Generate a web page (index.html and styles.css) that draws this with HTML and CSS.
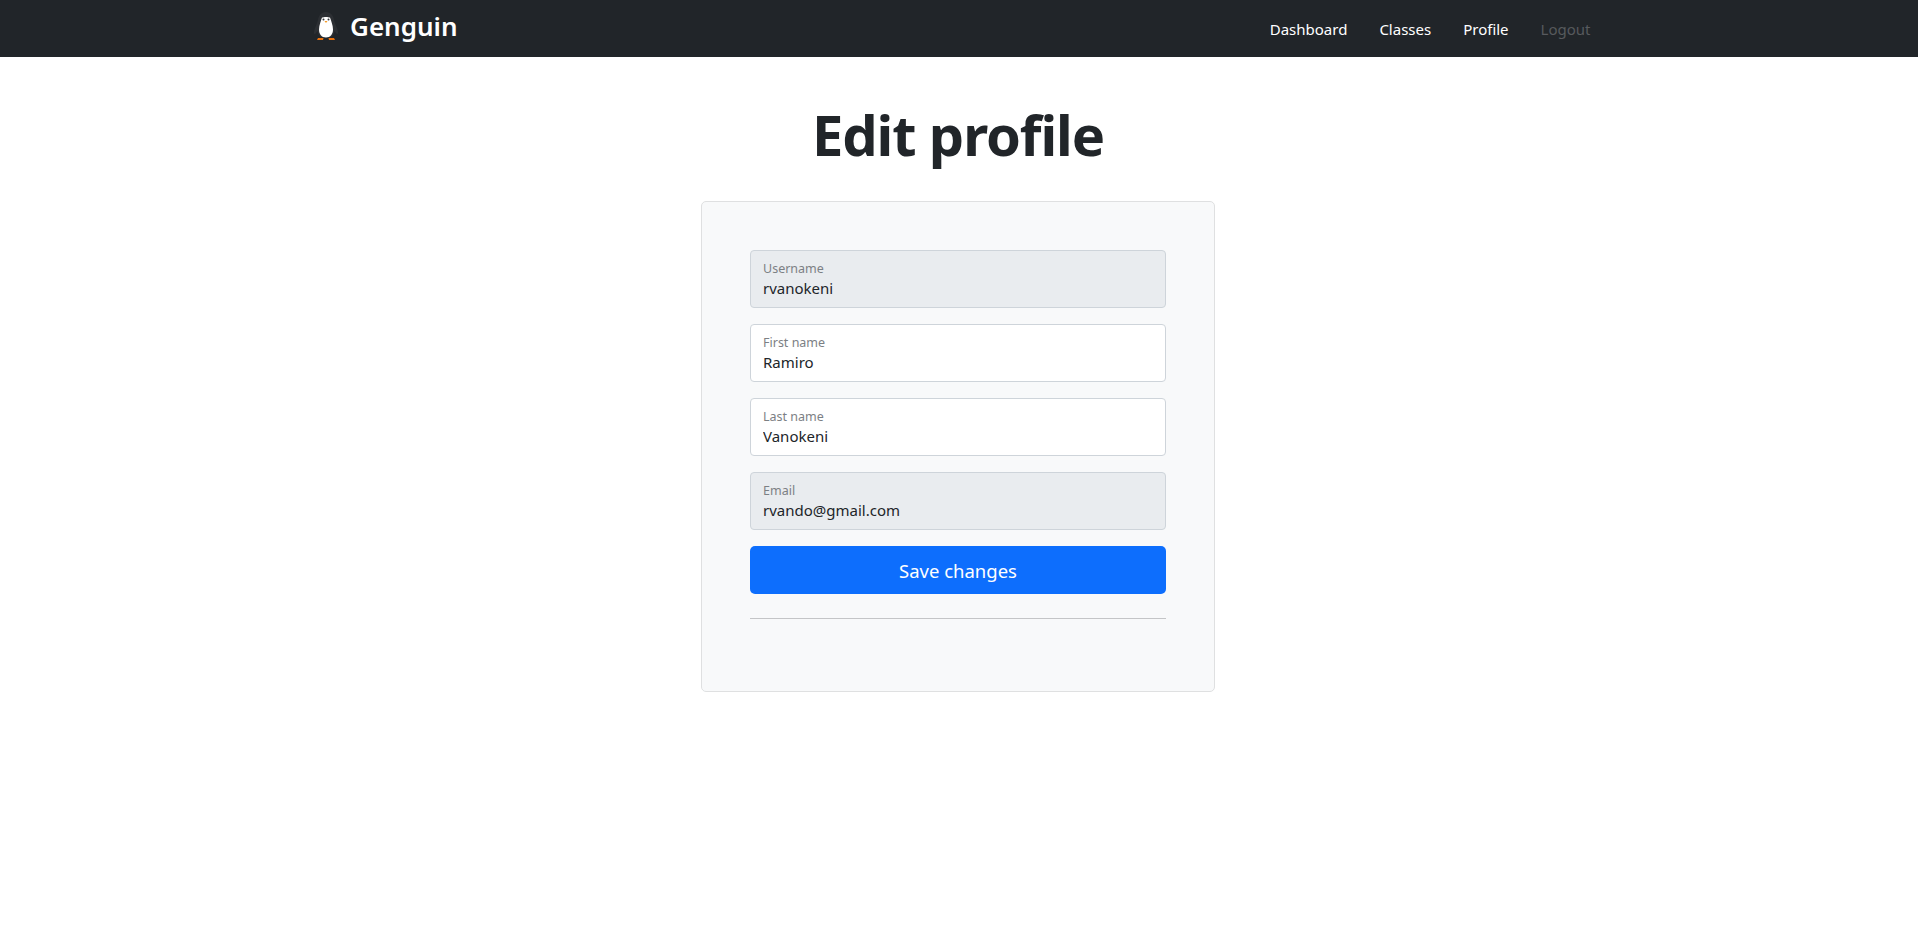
FILE: index.html
```html
<!DOCTYPE html>
<html lang="en">
<head>
<meta charset="utf-8">
<title>Edit profile - Genguin</title>
<link rel="stylesheet" href="styles.css">
</head>
<body>
<nav class="navbar">
  <div class="container nav-inner">
    <a class="brand" href="#">
      <svg class="logo" viewBox="0 0 50 50" width="50" height="50" aria-hidden="true">
        <path d="M25 11c-5 0-7.500 4-8 8-.500 3-3.500 8-4 12-.300 2 1 3 2 1l1.500-2c.500 3 1.500 5 3 6h11c1.500-1 2.500-3 3-6l1.500 2c1 2 2.300 1 2-1-.500-4-3.500-9-4-12-.500-4-3-8-8-8z" fill="#2c2f33"/>
        <path d="M25 16c-1.500 0-3 .500-4 .500-1 3-3 8-3 12 0 4.500 2.500 8 7 8s7-3.500 7-8c0-4-2-9-3-12-1 0-2.500-.500-4-.500z" fill="#fff"/>
        <circle cx="22.500" cy="18.500" r="1" fill="#33363a"/><circle cx="27.500" cy="18.500" r="1" fill="#33363a"/>
        <path d="M23.500 20h3l-1.500 2z" fill="#f59a23"/>
        <path d="M17 37h5.500l-.5 2h-6zM27.500 37H33l1 2h-6z" fill="#e8700c"/>
      </svg>
      <span class="brand-name">Genguin</span>
    </a>
    <ul class="nav-links">
      <li><a class="nav-link" href="#">Dashboard</a></li>
      <li><a class="nav-link" href="#">Classes</a></li>
      <li><a class="nav-link" href="#">Profile</a></li>
      <li><a class="nav-link muted" href="#">Logout</a></li>
    </ul>
  </div>
</nav>
<main class="container content">
  <h1 class="title">Edit profile</h1>
  <form class="card">
    <div class="field disabled">
      <label class="field-label" for="username">Username</label>
      <input class="field-input" id="username" value="rvanokeni" disabled>
    </div>
    <div class="field">
      <label class="field-label" for="first">First name</label>
      <input class="field-input" id="first" value="Ramiro">
    </div>
    <div class="field">
      <label class="field-label" for="last">Last name</label>
      <input class="field-input" id="last" value="Vanokeni">
    </div>
    <div class="field disabled">
      <label class="field-label" for="email">Email</label>
      <input class="field-input" id="email" value="rvando@gmail.com" disabled>
    </div>
    <button class="save" type="button">Save changes</button>
    <hr class="rule">
  </form>
</main>
</body>
</html>
```

FILE: styles.css
```css
* { box-sizing: border-box; }
html, body { margin: 0; height: 100%; }
body {
  background: #fff;
  color: #212529;
  font-family: "Noto Sans", "Open Sans", sans-serif;
  font-size: 16px;
  line-height: 1.5;
  overflow: hidden;
}
.container {
  width: 1320px;
  margin-left: 298px;
  padding: 0 12px;
}
.navbar {
  background: #212529;
  height: 57px;
  display: flex;
  align-items: center;
}
.nav-inner {
  display: flex;
  align-items: center;
  justify-content: space-between;
}
.brand {
  display: flex;
  align-items: center;
  color: #fff;
  text-decoration: none;
  margin-left: -9px;
}
.logo { display: block; margin-top: -5px; }
.brand-name {
  font-size: 26px;
  font-weight: 600;
  margin-left: -1px;
  margin-top: -5px;
}
.nav-links {
  display: flex;
  list-style: none;
  margin: 0 7.5px 0 0;
  padding: 0;
}
.nav-link {
  display: block;
  padding: 8px;
  margin-left: 16px;
  color: #fff;
  text-decoration: none;
  font-size: 15px;
  line-height: 24px;
}
.nav-link.muted { color: rgba(255, 255, 255, 0.25); }
.content {
  display: flex;
  flex-direction: column;
  align-items: center;
}
.title {
  margin: 44px 0 33px;
  font-size: 56px;
  font-weight: 700;
  letter-spacing: -1.1px;
  line-height: 67px;
  height: 67px;
  white-space: nowrap;
}
.card {
  width: 514px;
  padding: 48px;
  background: #f8f9fa;
  border: 1px solid #dfe0e1;
  border-radius: 5px;
  display: flex;
  flex-direction: column;
}
.field {
  height: 58px;
  margin-bottom: 16px;
  padding: 9px 12px 0;
  background: #fff;
  border: 1px solid #ced4da;
  border-radius: 4px;
}
.field.disabled { background: #e9ecef; }
.field-label {
  display: block;
  font-size: 12.5px;
  line-height: 17px;
  color: #7c8084;
}
.field-input {
  display: block;
  width: 100%;
  padding: 0;
  border: 0;
  outline: 0;
  background: transparent;
  color: #212529;
  font: inherit;
  font-size: 15px;
  line-height: 22px;
  height: 22px;
}
.save {
  height: 48px;
  padding-top: 2px;
  border: 0;
  border-radius: 5px;
  background: #0d6efd;
  color: #fff;
  font: inherit;
  font-size: 18.5px;
}
.rule {
  width: 100%;
  height: 1px;
  margin: 24px 0;
  border: 0;
  background: #c4c5c7;
}
```
